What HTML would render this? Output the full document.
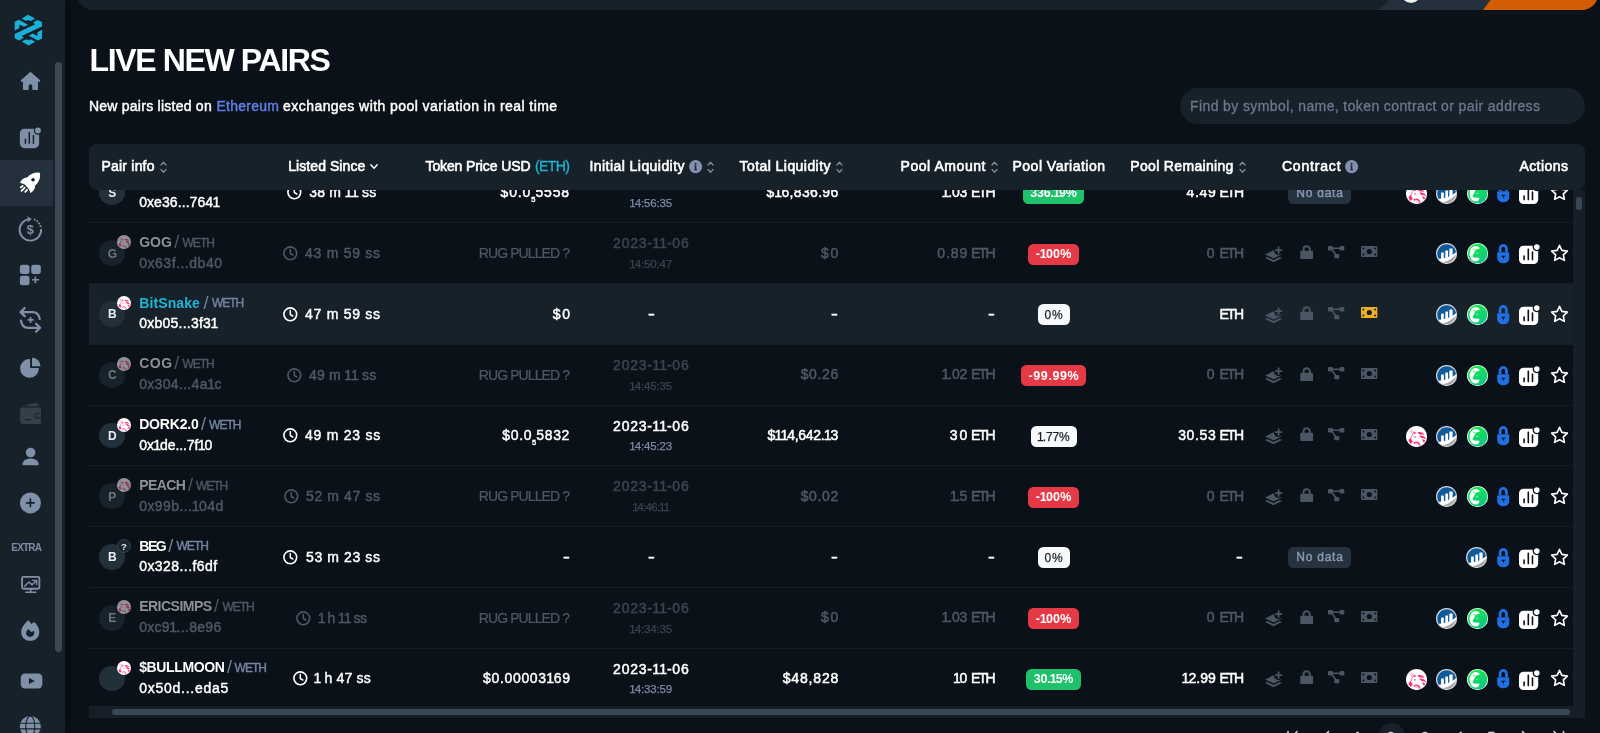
<!DOCTYPE html>
<html lang="en"><head><meta charset="utf-8"><title>Live New Pairs</title>
<style>
html,body{margin:0;padding:0;}
body{width:1600px;height:733px;overflow:hidden;background:#0b1118;font-family:"Liberation Sans", sans-serif;position:relative;}
.t{position:absolute;white-space:pre;display:block;}
.a{position:absolute;}
svg{position:absolute;overflow:visible;}
.row{position:absolute;left:89px;width:1484px;height:61px;border-top:1px solid #141c24;box-sizing:border-box;}
.av{position:absolute;width:25.8px;height:25.8px;border-radius:50%;background:#22303b;}
.bdg{position:absolute;height:21px;border-radius:5.5px;}
</style></head><body><div id="root" style="position:absolute;left:0;top:0;width:1600px;height:733px;overflow:hidden;will-change:transform;">
<svg width="0" height="0" style="position:absolute"><defs>
<linearGradient id="gg" gradientUnits="userSpaceOnUse" x1="6" y1="2" x2="14" y2="19"><stop offset="0" stop-color="#12e84e"/><stop offset="1" stop-color="#10c684"/></linearGradient>
<symbol id="uni" viewBox="0 0 20 20"><circle cx="10" cy="10" r="10" fill="#fff"/>
<path d="M3.300 3.800L6.300 7.500M4.500 3.400L7.300 6.600" stroke="#ff7dab" stroke-width=".7" fill="none"/>
<path d="M7.700 5.600C6.300 7.500 5.100 9.800 4.400 12" stroke="#ff6b9f" stroke-width=".9" fill="none"/>
<path fill="#ff2d78" d="M8.200 4.900L7.100 7.500L9.600 7z"/>
<ellipse cx="8.500" cy="10.200" rx=".95" ry=".6" fill="#ff2d78"/>
<path fill="#ff2d78" d="M2.500 13L4.700 11.200C4.900 12.800 5.600 13.900 6.500 14.600L4.400 16.900C3.300 16 2.600 14.700 2.500 13z"/>
<path fill="#ff2d78" d="M10.900 5.900C12.700 5.500 14.600 5.800 16 6.500L17.500 8.300C15.800 7.900 14.200 7.900 12.600 8z"/>
<path fill="#ff2d78" d="M12.400 8.700C14.400 8.800 16.300 9.500 17.800 10.300L19 12.400C17.400 11.500 15.700 11.100 14.100 11z"/>
<path fill="#ff2d78" d="M14.800 12.300C16.100 12.600 17.300 13.100 18.400 13.900L16.900 15.900z"/>
<path d="M7.300 16.400C8.200 15.500 9.300 15.100 10.300 15.300C11.800 15.600 12.800 17 13 18.600" stroke="#ff3d82" stroke-width="1.400" fill="none"/>
<path d="M9 17.400C9.600 17 10.400 17.100 10.900 17.700" stroke="#ff7dab" stroke-width=".7" fill="none"/>
</symbol>
<symbol id="cmc" viewBox="0 0 20 20"><circle cx="10" cy="10" r="10" fill="#d3d7db"/><circle cx="10" cy="10" r="8.900" fill="#fff"/>
<path fill="#105a99" d="M2.600 14.900A8.900 8.900 0 1 1 18.850 8.700C16.300 11 12.500 13.300 8 14.200C6 14.600 4 14.900 2.600 14.900z"/>
<path fill="#a6a6a6" d="M6.300 18.100C11 17.300 16 14.500 18.800 10.600A8.900 8.900 0 0 1 6.300 18.100z"/>
<path fill="#fff" d="M4.800 9.300q0-.4.400-.4h1.800q.4 0 .4.400V15H4.800zM8.800 7.500q0-.4.400-.4h1.800q.4 0 .4.400V14.500H8.800zM12.600 5.500q0-.4.400-.4h2.300q.4 0 .4.400V12L12.600 13.500z"/></symbol>
<symbol id="gecko" viewBox="0 0 20 20"><circle cx="10" cy="10" r="10" fill="#e4fff0"/><circle cx="10" cy="10" r="9.200" fill="url(#gg)"/>
<ellipse cx="8.200" cy="10.100" rx="5.800" ry="7.300" fill="#fff"/>
<path fill="url(#gg)" d="M14.200 3.600L11 5.600L8.600 6.200L7.900 7.300L5.100 12.600L6.600 13.700L11.700 13.900C11.700 15.300 11.200 16.600 10.200 17.700L16 17.500L19 10L17 4z"/>
<path d="M5.600 5.400L8.300 7" stroke="#12e050" stroke-width=".7" fill="none"/>
<ellipse cx="9.700" cy="9.800" rx="1" ry=".5" transform="rotate(-30 9.700 9.800)" fill="#b6f7cc"/></symbol>
<symbol id="block" viewBox="0 0 12.4 19.6"><path fill="none" stroke="#2070e2" stroke-width="2.800" d="M3 8V4.650a3.200 3.200 0 0 1 6.400 0V8"/>
<path fill="#2070e2" d="M0 9.350q0-1 1-1h10.400q1 0 1 1V13.450a6.200 6.100 0 0 1-12.400 0z"/>
<path fill="#0b1118" d="M4.300 11.850h3.900v.85H7L6.250 15.500L5.500 12.700H4.300z"/></symbol>
<symbol id="sq" viewBox="0 0 21 20"><rect x="0" y="1.700" width="19.200" height="18.300" rx="4.600" fill="#fff"/>
<circle cx="17.800" cy="3.100" r="4.100" fill="#0b1118"/><circle cx="17.800" cy="3.100" r="2.800" fill="#fff"/>
<path d="M5.100 12V15.600M9.300 5.200V15.600M13.500 8V15.600" stroke="#0b1118" stroke-width="1.600" stroke-linecap="round"/></symbol>
<symbol id="star" viewBox="0 0 18.400 17.600"><path fill="none" stroke="#fff" stroke-width="1.600" stroke-linejoin="round" d="M9.200 1.300l2.350 5 5.450.7-4 3.800 1 5.400-4.800-2.650-4.800 2.650 1-5.400-4-3.800 5.450-.7z"/></symbol>
<symbol id="layer" viewBox="0 0 18 17"><path d="M0 8.400 L8.500 4.200 L12 6 L17 8.400 L8.500 12.400 Z"/><path d="M0 12 L2.200 11 L8.500 14 L14.800 11 L17 12 L8.500 16.200 Z"/>
<circle cx="13.600" cy="4.400" r="4.600" fill="var(--bg,#0b1118)"/><path d="M13.600 .400V7.800M10 4.200H17.200" stroke-width="1.800" fill="none" stroke="currentColor"/></symbol>
<symbol id="lock" viewBox="0 0 13.400 14.400"><path fill="none" stroke-width="2" stroke="currentColor" d="M3.500 7V4.400a3.200 3.200 0 0 1 6.400 0V7"/><rect x="0" y="6" width="13.400" height="8.400" rx="1.500"/></symbol>
<symbol id="diag" viewBox="0 0 16.600 12.600"><rect x="0" y="0" width="5" height="4.600" rx="1"/><rect x="11.600" y="0" width="5" height="4.600" rx="1"/><rect x="6.300" y="8" width="5" height="4.600" rx="1"/>
<path d="M4 2.300H12.500M3.600 2.800L8.600 10" stroke-width="1.500" fill="none" stroke="currentColor"/></symbol>
<symbol id="money" viewBox="0 0 16.600 11"><rect width="16.600" height="11" rx="1.200"/><circle cx="8.300" cy="5.500" r="2.600" fill="var(--bg,#0b1118)"/>
<circle cx="2.400" cy="2.400" r="1" fill="var(--bg,#0b1118)"/><circle cx="14.200" cy="2.400" r="1" fill="var(--bg,#0b1118)"/><circle cx="2.400" cy="8.600" r="1" fill="var(--bg,#0b1118)"/><circle cx="14.200" cy="8.600" r="1" fill="var(--bg,#0b1118)"/></symbol>
</defs></svg>
<header id="topbar">
<div class="a" style="left:1360px;top:-20px;width:160px;height:30px;background:#24303b;"></div>
<div class="a" style="left:77px;top:-20px;width:1312px;height:30px;background:#17212a;border-radius:0 0 16px 16px;"></div>
<div class="a" style="left:1483px;top:-20px;width:115px;height:30px;overflow:hidden;border-radius:0 0 16px 0;"><div class="a" style="left:0;top:0;width:140px;height:30px;background:#d25d05;transform:skewX(-37deg);transform-origin:bottom left;"></div></div>
<div class="a" style="left:1400.5px;top:-17px;width:20px;height:20px;background:#f1f1f1;border-radius:50%;"></div>
</header>
<nav id="sidebar">
<div class="a" style="left:0px;top:0px;width:65px;height:733px;background:#17212a;box-shadow:3px 0 8px rgba(0,0,0,.35);"></div>
<div class="a" style="left:0px;top:160px;width:53px;height:45.5px;background:#24313d;"></div>
<div class="a" style="left:55.3px;top:62px;width:6.8px;height:590px;background:#3a4856;border-radius:4px;"></div>
<svg style="left:8px;top:8px;" width="44" height="44" viewBox="0 0 733 733"><g fill="#1cb0d8">
<polygon points="336,112 453,178 376,217 336,200 303,217 228,175"/>
<polygon points="112,230 180,197 335,277 267,312 190,273 190,335 112,377"/>
<polygon points="112,432 453,272 416,242 496,198 566,233 566,310 227,466 264,496 184,540 112,505"/>
<polygon points="568,508 500,541 345,461 413,426 490,465 490,403 568,361"/>
<polygon points="344,626 227,560 304,521 344,538 377,521 452,563"/>
</g></svg>
<svg style="left:14px;top:64px;" width="32" height="32" viewBox="0 0 733 733"><path fill="#8090a8" d="M377 180 L598 375 Q606 395 590 408 L550 408 L550 575 Q550 597 528 597 L440 597 Q418 597 418 575 L418 495 Q418 470 395 470 L360 470 Q337 470 337 495 L337 575 Q337 597 315 597 L227 597 Q205 597 205 575 L205 408 L165 408 Q150 395 157 375 Z"/></svg>
<svg style="left:14px;top:122px;" width="32" height="32" viewBox="0 0 733 733"><rect x="135" y="155" width="440" height="445" rx="105" fill="#8090a8"/>
<circle cx="548" cy="195" r="95" fill="#17212a"/><circle cx="548" cy="195" r="68" fill="#8090a8"/>
<path d="M262 395V488M350 240V488M445 310V488" stroke="#17212a" stroke-width="34" stroke-linecap="round" fill="none"/></svg>
<svg style="left:14px;top:167px;" width="32" height="32" viewBox="0 0 733 733"><path fill="#fff" d="M590 130 C500 110 380 150 300 240 C230 235 170 290 135 365 C180 360 225 385 255 415 L330 490 C350 520 375 560 365 595 C440 570 490 500 480 430 C570 350 620 230 590 130 Z"/>
<circle cx="435" cy="290" r="40" fill="#10181f"/>
<path d="M158 466 L200 434 M172 545 L245 472 M257 568 L300 525" stroke="#fff" stroke-width="42" stroke-linecap="round"/></svg>
<svg style="left:14px;top:213px;" width="32" height="32" viewBox="0 0 733 733"><path d="M622 385 A247 247 0 1 1 352 140" fill="none" stroke="#8090a8" stroke-width="44" stroke-linecap="round"/>
<path d="M285 70 L410 135 L300 215 L330 140 Z" fill="#8090a8"/>
<path d="M455 148 A247 247 0 0 1 615 325" fill="none" stroke="#8090a8" stroke-width="44" stroke-dasharray="38 30"/>
<text x="375" y="480" text-anchor="middle" font-family="Liberation Sans, sans-serif" font-weight="700" font-size="290" fill="#8090a8">$</text></svg>
<svg style="left:14px;top:258px;" width="32" height="32" viewBox="0 0 733 733"><g fill="#8090a8"><rect x="135" y="155" width="220" height="210" rx="58"/><rect x="395" y="155" width="220" height="210" rx="58"/><rect x="135" y="405" width="220" height="220" rx="58"/></g>
<path d="M412 500H575M490 425V580" stroke="#8090a8" stroke-width="36" fill="none"/></svg>
<svg style="left:14px;top:304px;" width="32" height="32" viewBox="0 0 733 733"><g fill="none" stroke="#8090a8" stroke-width="52" stroke-linecap="round" stroke-linejoin="round">
<path d="M590 340 C570 240 520 185 430 185 L160 185 M245 92 L152 185 L245 278"/>
<path d="M160 380 C175 480 230 545 320 545 L595 545 M505 452 L598 545 L505 635"/></g>
<path d="M312 365H450M380 297V435" stroke="#8090a8" stroke-width="38" fill="none"/></svg>
<svg style="left:14px;top:351px;" width="32" height="32" viewBox="0 0 733 733"><path fill="#8090a8" d="M368 185 A215 215 0 1 0 570 392 L368 392 Z"/>
<path fill="#8090a8" d="M412 152 A195 195 0 0 1 607 347 L412 347 Z"/></svg>
<svg style="left:14px;top:398px;" width="32" height="32" viewBox="0 0 733 733"><path fill="#343f4b" d="M165 235 C250 170 400 120 480 113 C540 110 570 150 577 190 L200 190 Z"/>
<path fill="#343f4b" d="M210 215 H620 V595 H210 Q140 595 140 525 V285 Q140 215 210 215 Z"/>
<rect x="462" y="348" width="200" height="125" rx="62" fill="#17212a"/>
<rect x="482" y="368" width="160" height="85" rx="42" fill="#343f4b"/>
<rect x="620" y="340" width="60" height="140" fill="#17212a"/>
<circle cx="540" cy="410" r="17" fill="#17212a"/>
<path d="M262 495H380" stroke="#17212a" stroke-width="30" stroke-linecap="round"/></svg>
<svg style="left:14px;top:441px;" width="32" height="32" viewBox="0 0 733 733"><circle cx="380" cy="265" r="110" fill="#8090a8"/>
<path fill="#8090a8" d="M195 540 C195 450 270 400 380 400 C490 400 565 450 565 540 Q565 558 545 558 L215 558 Q195 558 195 540 Z"/></svg>
<svg style="left:14px;top:487px;" width="32" height="32" viewBox="0 0 733 733"><circle cx="377" cy="365" r="240" fill="#8090a8"/>
<path d="M290 365H462M376 278V450" stroke="#17212a" stroke-width="38" stroke-linecap="round"/></svg>
<svg style="left:4px;top:530px;" width="52" height="70" viewBox="0 0 545 733.6"><rect x="189" y="491" width="182" height="125" rx="16" fill="none" stroke="#8090a8" stroke-width="19"/>
<path d="M280 625V650M228 652H333" stroke="#8090a8" stroke-width="17" stroke-linecap="round"/>
<path d="M216 590 L262 545 L295 575 L338 532 M300 528 H342 V568" fill="none" stroke="#8090a8" stroke-width="15" stroke-linejoin="round" stroke-linecap="round"/></svg>
<svg style="left:14px;top:615px;" width="32" height="32" viewBox="0 0 733 733"><path fill="#8090a8" d="M330 120 C230 200 165 300 165 395 C165 510 255 592 372 592 C490 592 580 510 580 395 C580 300 530 220 460 160 L400 205 Z"/>
<path fill="#17212a" d="M330 320 C295 350 278 385 278 410 C278 465 320 500 372 500 C425 500 465 460 465 410 C465 395 462 380 455 368 L392 392 Z"/></svg>
<svg style="left:10px;top:660px;" width="44" height="73" viewBox="0 0 442 733"><rect x="108" y="135" width="217" height="150" rx="42" fill="#8090a8"/>
<path d="M190 180 L190 240 L250 210 Z" fill="#17212a"/>
<circle cx="204" cy="668" r="106" fill="#8090a8"/>
<path d="M98 635H310M98 692H310" stroke="#17212a" stroke-width="11"/>
<ellipse cx="204" cy="668" rx="45" ry="106" fill="none" stroke="#17212a" stroke-width="11"/></svg>
<span class="t" style="left:11.30px;top:543.13px;font-size:10px;line-height:10px;color:#7d8ba5;font-weight:700;letter-spacing:-0.827px;">EXTRA</span>
</nav>
<div id="table-body" role="presentation">
<div class="a" style="left:89px;top:283.15px;width:1484px;height:60.9px;background:#17212a;"></div>
<div class="row" style="top:161.65px"></div>
<div class="row" style="top:222.4px"></div>
<div class="row" style="top:283.15px"></div>
<div class="row" style="top:343.9px"></div>
<div class="row" style="top:404.65px"></div>
<div class="row" style="top:465.4px"></div>
<div class="row" style="top:526.15px"></div>
<div class="row" style="top:586.9px"></div>
<div class="row" style="top:647.65px"></div>
</div>
<div id="scrollbars">
<div class="a" style="left:1573px;top:190px;width:12px;height:528px;background:#161f28;"></div>
<div class="a" style="left:1576px;top:197px;width:6px;height:12.5px;background:#3a4856;border-radius:3px;"></div>
<div class="a" style="left:89px;top:706px;width:1484px;height:12px;background:#161f28;"></div>
<div class="a" style="left:112px;top:708.5px;width:1458px;height:6.5px;background:#3a4856;border-radius:4px;"></div>
</div>
<div id="pagination">
<div class="a" style="left:1377.5px;top:723.4px;width:27px;height:27px;background:#17212a;border-radius:50%;"></div>
<svg style="left:1280px;top:725px" width="300" height="20" viewBox="1280 724 300 20"><g fill="none" stroke="#d4d8dd" stroke-width="1.6" stroke-linecap="round" stroke-linejoin="round"><path d="M1288 730.5V742M1297 730.5L1291.5 736.5L1297 742"/><path d="M1328.5 730.5L1323 736.5L1328.5 742"/><path d="M1522.5 730.5L1528 736.5L1522.5 742"/><path d="M1554 730.5L1559.5 736.5L1554 742M1563.5 730.5V742"/></g></svg>
<span class="t" style="left:1354.34px;top:729.95px;font-size:14px;line-height:14px;color:#d4d8dd;-webkit-text-stroke:0.45px #d4d8dd;"><span style="margin:0 -0.90px 0 -0.60px">1</span></span>
<span class="t" style="left:1387.10px;top:729.95px;font-size:14px;line-height:14px;color:#d4d8dd;-webkit-text-stroke:0.45px #d4d8dd;">2</span>
<span class="t" style="left:1421.10px;top:729.95px;font-size:14px;line-height:14px;color:#d4d8dd;-webkit-text-stroke:0.45px #d4d8dd;">3</span>
<span class="t" style="left:1455.60px;top:729.95px;font-size:14px;line-height:14px;color:#d4d8dd;-webkit-text-stroke:0.45px #d4d8dd;">4</span>
<span class="t" style="left:1487.60px;top:729.95px;font-size:14px;line-height:14px;color:#d4d8dd;-webkit-text-stroke:0.45px #d4d8dd;">5</span>
</div>
<div id="search">
<div class="a" style="left:1180px;top:88px;width:405px;height:36px;background:#17212a;border-radius:18px;"></div>
<span class="t" style="left:1190.00px;top:98.65px;font-size:14px;line-height:14px;color:#6b798e;letter-spacing:0.393px;-webkit-text-stroke:0.3px #6b798e;">Find by symbol, name, token contract or pair address</span>
</div>
<section id="heading">
<span class="t" style="left:89.60px;top:43.91px;font-size:32px;line-height:32px;color:#ffffff;font-weight:700;letter-spacing:-1.368px;">LIVE NEW PAIRS</span>
<span class="t" style="left:88.90px;top:98.75px;font-size:14px;line-height:14px;color:#ffffff;letter-spacing:0.251px;-webkit-text-stroke:0.45px #ffffff;">New pairs listed on</span>
<span class="t" style="left:216.50px;top:98.75px;font-size:14px;line-height:14px;color:#5f7fe8;letter-spacing:0.242px;-webkit-text-stroke:0.45px #5f7fe8;">Ethereum</span>
<span class="t" style="left:283.10px;top:98.75px;font-size:14px;line-height:14px;color:#ffffff;letter-spacing:0.438px;-webkit-text-stroke:0.45px #ffffff;">exchanges with pool variation in real time</span>
</section>
<div id="table-head" role="row">
<div class="a" style="left:89px;top:144px;width:1496px;height:46px;background:#17212a;border-radius:8px;z-index:5;"></div>
<svg style="left:159.5px;top:160.5px;z-index:6" width="7" height="12.5" viewBox="0 0 7 12.5"><path d="M1 4 L3.5 1.3 L6 4 M1 8.5 L3.5 11.2 L6 8.5" fill="none" stroke="#7d8ba5" stroke-width="1.3" stroke-linecap="round" stroke-linejoin="round"/></svg>
<svg style="left:707px;top:160.5px;z-index:6" width="7" height="12.5" viewBox="0 0 7 12.5"><path d="M1 4 L3.5 1.3 L6 4 M1 8.5 L3.5 11.2 L6 8.5" fill="none" stroke="#7d8ba5" stroke-width="1.3" stroke-linecap="round" stroke-linejoin="round"/></svg>
<svg style="left:835.7px;top:160.5px;z-index:6" width="7" height="12.5" viewBox="0 0 7 12.5"><path d="M1 4 L3.5 1.3 L6 4 M1 8.5 L3.5 11.2 L6 8.5" fill="none" stroke="#7d8ba5" stroke-width="1.3" stroke-linecap="round" stroke-linejoin="round"/></svg>
<svg style="left:990.7px;top:160.5px;z-index:6" width="7" height="12.5" viewBox="0 0 7 12.5"><path d="M1 4 L3.5 1.3 L6 4 M1 8.5 L3.5 11.2 L6 8.5" fill="none" stroke="#7d8ba5" stroke-width="1.3" stroke-linecap="round" stroke-linejoin="round"/></svg>
<svg style="left:1238.7px;top:160.5px;z-index:6" width="7" height="12.5" viewBox="0 0 7 12.5"><path d="M1 4 L3.5 1.3 L6 4 M1 8.5 L3.5 11.2 L6 8.5" fill="none" stroke="#7d8ba5" stroke-width="1.3" stroke-linecap="round" stroke-linejoin="round"/></svg>
<svg style="left:370px;top:164.3px;z-index:6" width="8" height="5.5" viewBox="0 0 8 5.5"><path d="M0.8 0.8 L4 4.3 L7.2 0.8" fill="none" stroke="#fff" stroke-width="1.4" stroke-linecap="round" stroke-linejoin="round"/></svg>
<svg style="left:689.3px;top:160.3px;z-index:6" width="13.2" height="13.2" viewBox="0 0 13.2 13.2"><circle cx="6.6" cy="6.6" r="6.6" fill="#8291ad"/><circle cx="6.6" cy="3.7" r="1" fill="#17212a"/><path d="M5.3 5.6h2v3.6h.8v1.1H5.1V9.2h.9V6.7h-.7z" fill="#17212a"/></svg>
<svg style="left:1345.3px;top:160.3px;z-index:6" width="13.2" height="13.2" viewBox="0 0 13.2 13.2"><circle cx="6.6" cy="6.6" r="6.6" fill="#8291ad"/><circle cx="6.6" cy="3.7" r="1" fill="#17212a"/><path d="M5.3 5.6h2v3.6h.8v1.1H5.1V9.2h.9V6.7h-.7z" fill="#17212a"/></svg>
<span class="t" style="left:101.50px;top:159.35px;font-size:14px;line-height:14px;color:#ffffff;letter-spacing:0.205px;-webkit-text-stroke:0.6px #ffffff;z-index:6;">Pair info</span>
<span class="t" style="left:288.25px;top:159.35px;font-size:14px;line-height:14px;color:#ffffff;letter-spacing:0.065px;-webkit-text-stroke:0.6px #ffffff;z-index:6;">Listed Since</span>
<span class="t" style="left:425.50px;top:159.35px;font-size:14px;line-height:14px;color:#ffffff;letter-spacing:-0.114px;-webkit-text-stroke:0.6px #ffffff;z-index:6;">Token Price USD</span>
<span class="t" style="left:535.00px;top:159.35px;font-size:14px;line-height:14px;color:#1fb6d5;letter-spacing:-0.582px;-webkit-text-stroke:0.3px #1fb6d5;z-index:6;">(ETH)</span>
<span class="t" style="left:589.50px;top:159.35px;font-size:14px;line-height:14px;color:#ffffff;letter-spacing:0.441px;-webkit-text-stroke:0.6px #ffffff;z-index:6;">Initial Liquidity</span>
<span class="t" style="left:739.50px;top:159.35px;font-size:14px;line-height:14px;color:#ffffff;letter-spacing:0.441px;-webkit-text-stroke:0.6px #ffffff;z-index:6;">Total Liquidity</span>
<span class="t" style="left:900.50px;top:159.35px;font-size:14px;line-height:14px;color:#ffffff;letter-spacing:0.561px;-webkit-text-stroke:0.6px #ffffff;z-index:6;">Pool Amount</span>
<span class="t" style="left:1012.50px;top:159.35px;font-size:14px;line-height:14px;color:#ffffff;letter-spacing:0.489px;-webkit-text-stroke:0.6px #ffffff;z-index:6;">Pool Variation</span>
<span class="t" style="left:1130.30px;top:159.35px;font-size:14px;line-height:14px;color:#ffffff;letter-spacing:0.327px;-webkit-text-stroke:0.6px #ffffff;z-index:6;">Pool Remaining</span>
<span class="t" style="left:1281.90px;top:159.35px;font-size:14px;line-height:14px;color:#ffffff;letter-spacing:0.825px;-webkit-text-stroke:0.6px #ffffff;z-index:6;">Contract</span>
<span class="t" style="left:1519.40px;top:159.35px;font-size:14px;line-height:14px;color:#ffffff;letter-spacing:0.446px;-webkit-text-stroke:0.6px #ffffff;z-index:6;">Actions</span>
</div>
<div id="row-1" role="row">
<div class="av" style="left:99.4px;top:179.70px"></div>
<svg style="left:117px;top:174.65px;opacity:1" width="14" height="14" viewBox="0 0 20 20"><use href="#uni"/></svg>
<svg style="left:286.5px;top:185.25px" width="14.6" height="14.6" viewBox="0 0 14.6 14.6"><circle cx="7.3" cy="7.3" r="6.4" fill="none" stroke="#ffffff" stroke-width="1.6"/><path d="M7.3 3.6V7.5L9.8 9" fill="none" stroke="#ffffff" stroke-width="1.5" stroke-linecap="round" stroke-linejoin="round"/></svg>
<div class="bdg" style="left:1022.85px;top:182.75px;width:61.5px;background:#1fc16b"></div>
<div class="bdg" style="left:1288px;top:182.50px;width:63px;height:21px;background:#26333f"></div>
<svg style="left:1405.800px;top:182.65px" width="21.2" height="21.2" viewBox="0 0 20 20"><use href="#uni"/></svg>
<svg style="left:1436.2px;top:182.65px" width="21.2" height="21.2" viewBox="0 0 20 20"><use href="#cmc"/></svg>
<svg style="left:1466.7px;top:182.65px" width="21.2" height="21.2" viewBox="0 0 20 20"><use href="#gecko"/></svg>
<svg style="left:1497.100px;top:183.25px" width="12.6" height="19.6" viewBox="0 0 12.4 19.6"><use href="#block"/></svg>
<svg style="left:1519.2px;top:183.55px" width="21" height="20" viewBox="0 0 21 20"><use href="#sq"/></svg>
<svg style="left:1549.600px;top:183.25px" width="19" height="17.8" viewBox="0 0 18.4 17.6"><use href="#star"/></svg>
<span class="t" style="left:108.29px;top:186.89px;font-size:12px;line-height:12px;color:#eceff2;font-weight:700;">S</span>
<span class="t" style="left:139.20px;top:194.75px;font-size:14px;line-height:14px;color:#ffffff;letter-spacing:0.074px;-webkit-text-stroke:0.45px #ffffff;">0xe36...764<span style="margin:0 -0.90px 0 -0.60px">1</span></span>
<span class="t" style="left:309.25px;top:185.40px;font-size:14px;line-height:14px;color:#ffffff;letter-spacing:0.163px;-webkit-text-stroke:0.45px #ffffff;">38 m <span style="margin:0 -0.90px 0 -0.60px">1</span><span style="margin:0 -0.90px 0 -0.60px">1</span> ss</span>
<span class="t" style="left:500.60px;top:185.20px;font-size:14px;line-height:14px;color:#ffffff;letter-spacing:0.853px;-webkit-text-stroke:0.45px #ffffff;">$0.0<span style="font-size:7.5px;position:relative;top:4.5px;letter-spacing:0">5</span>5558</span>
<span class="t" style="left:613.10px;top:175.65px;font-size:14px;line-height:14px;color:#ffffff;letter-spacing:0.770px;-webkit-text-stroke:0.5px #ffffff;">2023-<span style="margin:0 -0.90px 0 -0.60px">1</span><span style="margin:0 -0.90px 0 -0.60px">1</span>-06</span>
<span class="t" style="left:629.80px;top:198.42px;font-size:11.5px;line-height:11.5px;color:#7c8aa6;letter-spacing:-0.166px;-webkit-text-stroke:0.25px #7c8aa6;"><span style="margin:0 -0.74px 0 -0.49px">1</span>4:56:35</span>
<span class="t" style="left:766.60px;top:185.20px;font-size:14px;line-height:14px;color:#ffffff;letter-spacing:0.343px;-webkit-text-stroke:0.5px #ffffff;">$<span style="margin:0 -0.90px 0 -0.60px">1</span>6,836.96</span>
<span class="t" style="left:942.20px;top:185.20px;font-size:14px;line-height:14px;color:#ffffff;letter-spacing:-0.227px;-webkit-text-stroke:0.5px #ffffff;"><span style="margin:0 -0.90px 0 -0.60px">1</span>.03</span>
<span class="t" style="left:971.00px;top:185.20px;font-size:14px;line-height:14px;color:#ffffff;letter-spacing:-1.750px;-webkit-text-stroke:0.5px #ffffff;">ETH</span>
<span class="t" style="left:1186.50px;top:185.20px;font-size:14px;line-height:14px;color:#ffffff;letter-spacing:0.683px;-webkit-text-stroke:0.5px #ffffff;">4.49</span>
<span class="t" style="left:1219.50px;top:185.20px;font-size:14px;line-height:14px;color:#ffffff;letter-spacing:-1.750px;-webkit-text-stroke:0.5px #ffffff;">ETH</span>
<span class="t" style="left:1030.35px;top:187.37px;font-size:12.5px;line-height:12.5px;color:#fff;font-weight:700;letter-spacing:-0.258px;">336.<span style="margin:0 -0.80px 0 -0.54px">1</span>9%</span>
<span class="t" style="left:1296.35px;top:186.99px;font-size:12px;line-height:12px;color:#8b9bb4;letter-spacing:0.745px;-webkit-text-stroke:0.4px #8b9bb4;">No data</span>
</div>
<div id="row-2" role="row">
<div class="av" style="left:99.4px;top:240.45px;background:#18222b"></div>
<svg style="left:117px;top:235.40px;opacity:0.55" width="14" height="14" viewBox="0 0 20 20"><use href="#uni"/></svg>
<svg style="left:282.5px;top:246.0px" width="14.6" height="14.6" viewBox="0 0 14.6 14.6"><circle cx="7.3" cy="7.3" r="6.4" fill="none" stroke="#4d5865" stroke-width="1.6"/><path d="M7.3 3.6V7.5L9.8 9" fill="none" stroke="#4d5865" stroke-width="1.5" stroke-linecap="round" stroke-linejoin="round"/></svg>
<div class="bdg" style="left:1028.35px;top:243.50px;width:50.5px;background:#e63946"></div>
<svg style="left:1264.5px;top:245.95px" width="18" height="17" viewBox="0 0 18 17" fill="currentColor" color="#4a5664"><use href="#layer"/></svg>
<svg style="left:1299.5px;top:245.05px" width="13.4" height="14.1" viewBox="0 0 13.4 14.4" fill="currentColor" color="#4a5664"><use href="#lock"/></svg>
<svg style="left:1327.5px;top:245.95px" width="16.6" height="12.6" viewBox="0 0 16.6 12.6" fill="currentColor" color="#4a5664"><use href="#diag"/></svg>
<svg style="left:1360.6px;top:246.25px" width="16.6" height="11" viewBox="0 0 16.6 11" fill="currentColor" color="#4a5664"><use href="#money"/></svg>
<svg style="left:1436.2px;top:243.4px" width="21.2" height="21.2" viewBox="0 0 20 20"><use href="#cmc"/></svg>
<svg style="left:1466.7px;top:243.4px" width="21.2" height="21.2" viewBox="0 0 20 20"><use href="#gecko"/></svg>
<svg style="left:1497.100px;top:244.0px" width="12.6" height="19.6" viewBox="0 0 12.4 19.6"><use href="#block"/></svg>
<svg style="left:1519.2px;top:244.3px" width="21" height="20" viewBox="0 0 21 20"><use href="#sq"/></svg>
<svg style="left:1549.600px;top:244.0px" width="19" height="17.8" viewBox="0 0 18.4 17.6"><use href="#star"/></svg>
<span class="t" style="left:107.63px;top:247.64px;font-size:12px;line-height:12px;color:#6f7780;font-weight:700;">G</span>
<span class="t" style="left:139.20px;top:234.85px;font-size:14px;line-height:14px;color:#8d9196;font-weight:700;letter-spacing:-0.036px;">GOG</span>
<span class="t" style="left:174.30px;top:232.86px;font-size:18px;line-height:18px;color:#4d5865;">/</span>
<span class="t" style="left:182.50px;top:236.54px;font-size:12px;line-height:12px;color:#4d5865;letter-spacing:-0.976px;-webkit-text-stroke:0.4px #4d5865;">WETH</span>
<span class="t" style="left:139.20px;top:255.50px;font-size:14px;line-height:14px;color:#4d5865;letter-spacing:0.522px;-webkit-text-stroke:0.45px #4d5865;">0x63f...db40</span>
<span class="t" style="left:305.00px;top:246.15px;font-size:14px;line-height:14px;color:#4d5865;letter-spacing:0.724px;-webkit-text-stroke:0.45px #4d5865;">43 m 59 ss</span>
<span class="t" style="left:478.80px;top:246.00px;font-size:14px;line-height:14px;color:#4d5865;letter-spacing:-0.905px;-webkit-text-stroke:0.2px #4d5865;">RUG PULLED ?</span>
<span class="t" style="left:613.10px;top:236.40px;font-size:14px;line-height:14px;color:#3a444f;letter-spacing:0.770px;-webkit-text-stroke:0.5px #3a444f;">2023-<span style="margin:0 -0.90px 0 -0.60px">1</span><span style="margin:0 -0.90px 0 -0.60px">1</span>-06</span>
<span class="t" style="left:629.80px;top:259.17px;font-size:11.5px;line-height:11.5px;color:#3a444f;letter-spacing:-0.166px;-webkit-text-stroke:0.25px #3a444f;"><span style="margin:0 -0.74px 0 -0.49px">1</span>4:50:47</span>
<span class="t" style="left:821.00px;top:245.95px;font-size:14px;line-height:14px;color:#4d5865;letter-spacing:1.722px;-webkit-text-stroke:0.5px #4d5865;">$0</span>
<span class="t" style="left:937.30px;top:245.95px;font-size:14px;line-height:14px;color:#4d5865;letter-spacing:0.917px;-webkit-text-stroke:0.5px #4d5865;">0.89</span>
<span class="t" style="left:971.00px;top:245.95px;font-size:14px;line-height:14px;color:#4d5865;letter-spacing:-1.750px;-webkit-text-stroke:0.5px #4d5865;">ETH</span>
<span class="t" style="left:1206.70px;top:245.95px;font-size:14px;line-height:14px;color:#4d5865;-webkit-text-stroke:0.5px #4d5865;">0</span>
<span class="t" style="left:1219.50px;top:245.95px;font-size:14px;line-height:14px;color:#4d5865;letter-spacing:-1.750px;-webkit-text-stroke:0.5px #4d5865;">ETH</span>
<span class="t" style="left:1035.85px;top:248.12px;font-size:12.5px;line-height:12.5px;color:#fff;font-weight:700;letter-spacing:0.168px;">-<span style="margin:0 -0.80px 0 -0.54px">1</span>00%</span>
</div>
<div id="row-3" role="row">
<div class="av" style="left:99.4px;top:301.20px"></div>
<svg style="left:117px;top:296.15px;opacity:1" width="14" height="14" viewBox="0 0 20 20"><use href="#uni"/></svg>
<svg style="left:283.2px;top:306.75px" width="14.6" height="14.6" viewBox="0 0 14.6 14.6"><circle cx="7.3" cy="7.3" r="6.4" fill="none" stroke="#ffffff" stroke-width="1.6"/><path d="M7.3 3.6V7.5L9.8 9" fill="none" stroke="#ffffff" stroke-width="1.5" stroke-linecap="round" stroke-linejoin="round"/></svg>
<div class="bdg" style="left:1037.60px;top:304.25px;width:32px;background:#f8f9fa"></div>
<svg style="left:1264.5px;top:306.70px;--bg:#17212a" width="18" height="17" viewBox="0 0 18 17" fill="currentColor" color="#4a5664"><use href="#layer"/></svg>
<svg style="left:1299.5px;top:305.80px" width="13.4" height="14.1" viewBox="0 0 13.4 14.4" fill="currentColor" color="#4a5664"><use href="#lock"/></svg>
<svg style="left:1327.5px;top:306.70px" width="16.6" height="12.6" viewBox="0 0 16.6 12.6" fill="currentColor" color="#4a5664"><use href="#diag"/></svg>
<svg style="left:1360.6px;top:307.00px;--bg:#17212a" width="16.6" height="11" viewBox="0 0 16.6 11" fill="currentColor" color="#f2b124"><use href="#money"/></svg>
<svg style="left:1436.2px;top:304.15px" width="21.2" height="21.2" viewBox="0 0 20 20"><use href="#cmc"/></svg>
<svg style="left:1466.7px;top:304.15px" width="21.2" height="21.2" viewBox="0 0 20 20"><use href="#gecko"/></svg>
<svg style="left:1497.100px;top:304.75px" width="12.6" height="19.6" viewBox="0 0 12.4 19.6"><use href="#block"/></svg>
<svg style="left:1519.2px;top:305.049px" width="21" height="20" viewBox="0 0 21 20"><use href="#sq"/></svg>
<svg style="left:1549.600px;top:304.75px" width="19" height="17.8" viewBox="0 0 18.4 17.6"><use href="#star"/></svg>
<span class="t" style="left:107.96px;top:308.39px;font-size:12px;line-height:12px;color:#eceff2;font-weight:700;">B</span>
<span class="t" style="left:139.20px;top:295.60px;font-size:14px;line-height:14px;color:#1fb6d5;font-weight:700;letter-spacing:0.111px;">BitSnake</span>
<span class="t" style="left:203.50px;top:293.61px;font-size:18px;line-height:18px;color:#7484a0;">/</span>
<span class="t" style="left:211.90px;top:297.29px;font-size:12px;line-height:12px;color:#7484a0;letter-spacing:-0.976px;-webkit-text-stroke:0.4px #7484a0;">WETH</span>
<span class="t" style="left:139.20px;top:316.25px;font-size:14px;line-height:14px;color:#ffffff;letter-spacing:0.237px;-webkit-text-stroke:0.45px #ffffff;">0xb05...3f3<span style="margin:0 -0.90px 0 -0.60px">1</span></span>
<span class="t" style="left:305.00px;top:306.90px;font-size:14px;line-height:14px;color:#ffffff;letter-spacing:0.724px;-webkit-text-stroke:0.45px #ffffff;">47 m 59 ss</span>
<span class="t" style="left:552.70px;top:306.70px;font-size:14px;line-height:14px;color:#ffffff;letter-spacing:1.722px;-webkit-text-stroke:0.45px #ffffff;">$0</span>
<span class="t" style="left:647.60px;top:306.70px;font-size:14px;line-height:14px;color:#ffffff;-webkit-text-stroke:0.45px #ffffff;transform:scaleX(1.45);transform-origin:0 0;">-</span>
<span class="t" style="left:830.80px;top:306.70px;font-size:14px;line-height:14px;color:#ffffff;-webkit-text-stroke:0.45px #ffffff;transform:scaleX(1.45);transform-origin:0 0;">-</span>
<span class="t" style="left:988.00px;top:306.70px;font-size:14px;line-height:14px;color:#ffffff;-webkit-text-stroke:0.45px #ffffff;transform:scaleX(1.45);transform-origin:0 0;">-</span>
<span class="t" style="left:1219.50px;top:306.70px;font-size:14px;line-height:14px;color:#ffffff;letter-spacing:-1.750px;-webkit-text-stroke:0.5px #ffffff;">ETH</span>
<span class="t" style="left:1044.60px;top:309.29px;font-size:12px;line-height:12px;color:#1a232c;letter-spacing:0.656px;-webkit-text-stroke:0.25px #1a232c;">0%</span>
</div>
<div id="row-4" role="row">
<div class="av" style="left:99.4px;top:361.95px;background:#18222b"></div>
<svg style="left:117px;top:356.90px;opacity:0.55" width="14" height="14" viewBox="0 0 20 20"><use href="#uni"/></svg>
<svg style="left:286.9px;top:367.5px" width="14.6" height="14.6" viewBox="0 0 14.6 14.6"><circle cx="7.3" cy="7.3" r="6.4" fill="none" stroke="#4d5865" stroke-width="1.6"/><path d="M7.3 3.6V7.5L9.8 9" fill="none" stroke="#4d5865" stroke-width="1.5" stroke-linecap="round" stroke-linejoin="round"/></svg>
<div class="bdg" style="left:1021.10px;top:365.00px;width:65px;background:#e63946"></div>
<svg style="left:1264.5px;top:367.45px" width="18" height="17" viewBox="0 0 18 17" fill="currentColor" color="#4a5664"><use href="#layer"/></svg>
<svg style="left:1299.5px;top:366.55px" width="13.4" height="14.1" viewBox="0 0 13.4 14.4" fill="currentColor" color="#4a5664"><use href="#lock"/></svg>
<svg style="left:1327.5px;top:367.45px" width="16.6" height="12.6" viewBox="0 0 16.6 12.6" fill="currentColor" color="#4a5664"><use href="#diag"/></svg>
<svg style="left:1360.6px;top:367.75px" width="16.6" height="11" viewBox="0 0 16.6 11" fill="currentColor" color="#4a5664"><use href="#money"/></svg>
<svg style="left:1436.2px;top:364.9px" width="21.2" height="21.2" viewBox="0 0 20 20"><use href="#cmc"/></svg>
<svg style="left:1466.7px;top:364.9px" width="21.2" height="21.2" viewBox="0 0 20 20"><use href="#gecko"/></svg>
<svg style="left:1497.100px;top:365.5px" width="12.6" height="19.6" viewBox="0 0 12.4 19.6"><use href="#block"/></svg>
<svg style="left:1519.2px;top:365.799px" width="21" height="20" viewBox="0 0 21 20"><use href="#sq"/></svg>
<svg style="left:1549.600px;top:365.5px" width="19" height="17.8" viewBox="0 0 18.4 17.6"><use href="#star"/></svg>
<span class="t" style="left:107.96px;top:369.14px;font-size:12px;line-height:12px;color:#6f7780;font-weight:700;">C</span>
<span class="t" style="left:139.20px;top:356.35px;font-size:14px;line-height:14px;color:#8d9196;font-weight:700;letter-spacing:0.505px;">COG</span>
<span class="t" style="left:174.30px;top:354.36px;font-size:18px;line-height:18px;color:#4d5865;">/</span>
<span class="t" style="left:182.40px;top:358.04px;font-size:12px;line-height:12px;color:#4d5865;letter-spacing:-0.976px;-webkit-text-stroke:0.4px #4d5865;">WETH</span>
<span class="t" style="left:139.20px;top:377.00px;font-size:14px;line-height:14px;color:#4d5865;letter-spacing:0.318px;-webkit-text-stroke:0.45px #4d5865;">0x304...4a<span style="margin:0 -0.90px 0 -0.60px">1</span>c</span>
<span class="t" style="left:308.90px;top:367.65px;font-size:14px;line-height:14px;color:#4d5865;letter-spacing:0.208px;-webkit-text-stroke:0.45px #4d5865;">49 m <span style="margin:0 -0.90px 0 -0.60px">1</span><span style="margin:0 -0.90px 0 -0.60px">1</span> ss</span>
<span class="t" style="left:478.80px;top:367.50px;font-size:14px;line-height:14px;color:#4d5865;letter-spacing:-0.905px;-webkit-text-stroke:0.2px #4d5865;">RUG PULLED ?</span>
<span class="t" style="left:613.10px;top:357.90px;font-size:14px;line-height:14px;color:#3a444f;letter-spacing:0.770px;-webkit-text-stroke:0.5px #3a444f;">2023-<span style="margin:0 -0.90px 0 -0.60px">1</span><span style="margin:0 -0.90px 0 -0.60px">1</span>-06</span>
<span class="t" style="left:629.80px;top:380.67px;font-size:11.5px;line-height:11.5px;color:#3a444f;letter-spacing:-0.166px;-webkit-text-stroke:0.25px #3a444f;"><span style="margin:0 -0.74px 0 -0.49px">1</span>4:45:35</span>
<span class="t" style="left:800.70px;top:367.45px;font-size:14px;line-height:14px;color:#4d5865;letter-spacing:0.638px;-webkit-text-stroke:0.5px #4d5865;">$0.26</span>
<span class="t" style="left:942.20px;top:367.45px;font-size:14px;line-height:14px;color:#4d5865;letter-spacing:-0.227px;-webkit-text-stroke:0.5px #4d5865;"><span style="margin:0 -0.90px 0 -0.60px">1</span>.02</span>
<span class="t" style="left:971.00px;top:367.45px;font-size:14px;line-height:14px;color:#4d5865;letter-spacing:-1.750px;-webkit-text-stroke:0.5px #4d5865;">ETH</span>
<span class="t" style="left:1206.70px;top:367.45px;font-size:14px;line-height:14px;color:#4d5865;-webkit-text-stroke:0.5px #4d5865;">0</span>
<span class="t" style="left:1219.50px;top:367.45px;font-size:14px;line-height:14px;color:#4d5865;letter-spacing:-1.750px;-webkit-text-stroke:0.5px #4d5865;">ETH</span>
<span class="t" style="left:1028.60px;top:369.62px;font-size:12.5px;line-height:12.5px;color:#fff;font-weight:700;letter-spacing:0.573px;">-99.99%</span>
</div>
<div id="row-5" role="row">
<div class="av" style="left:99.4px;top:422.70px"></div>
<svg style="left:117px;top:417.65px;opacity:1" width="14" height="14" viewBox="0 0 20 20"><use href="#uni"/></svg>
<svg style="left:282.9px;top:428.25px" width="14.6" height="14.6" viewBox="0 0 14.6 14.6"><circle cx="7.3" cy="7.3" r="6.4" fill="none" stroke="#ffffff" stroke-width="1.6"/><path d="M7.3 3.6V7.5L9.8 9" fill="none" stroke="#ffffff" stroke-width="1.5" stroke-linecap="round" stroke-linejoin="round"/></svg>
<div class="bdg" style="left:1030.60px;top:425.75px;width:46px;background:#f8f9fa"></div>
<svg style="left:1264.5px;top:428.20px" width="18" height="17" viewBox="0 0 18 17" fill="currentColor" color="#4a5664"><use href="#layer"/></svg>
<svg style="left:1299.5px;top:427.30px" width="13.4" height="14.1" viewBox="0 0 13.4 14.4" fill="currentColor" color="#4a5664"><use href="#lock"/></svg>
<svg style="left:1327.5px;top:428.20px" width="16.6" height="12.6" viewBox="0 0 16.6 12.6" fill="currentColor" color="#4a5664"><use href="#diag"/></svg>
<svg style="left:1360.6px;top:428.50px" width="16.6" height="11" viewBox="0 0 16.6 11" fill="currentColor" color="#4a5664"><use href="#money"/></svg>
<svg style="left:1405.800px;top:425.65px" width="21.2" height="21.2" viewBox="0 0 20 20"><use href="#uni"/></svg>
<svg style="left:1436.2px;top:425.65px" width="21.2" height="21.2" viewBox="0 0 20 20"><use href="#cmc"/></svg>
<svg style="left:1466.7px;top:425.65px" width="21.2" height="21.2" viewBox="0 0 20 20"><use href="#gecko"/></svg>
<svg style="left:1497.100px;top:426.25px" width="12.6" height="19.6" viewBox="0 0 12.4 19.6"><use href="#block"/></svg>
<svg style="left:1519.2px;top:426.549px" width="21" height="20" viewBox="0 0 21 20"><use href="#sq"/></svg>
<svg style="left:1549.600px;top:426.25px" width="19" height="17.8" viewBox="0 0 18.4 17.6"><use href="#star"/></svg>
<span class="t" style="left:107.96px;top:429.89px;font-size:12px;line-height:12px;color:#eceff2;font-weight:700;">D</span>
<span class="t" style="left:139.20px;top:417.10px;font-size:14px;line-height:14px;color:#ffffff;font-weight:700;letter-spacing:-0.181px;">DORK2.0</span>
<span class="t" style="left:201.00px;top:415.11px;font-size:18px;line-height:18px;color:#7484a0;">/</span>
<span class="t" style="left:209.10px;top:418.79px;font-size:12px;line-height:12px;color:#7484a0;letter-spacing:-0.976px;-webkit-text-stroke:0.4px #7484a0;">WETH</span>
<span class="t" style="left:139.20px;top:437.75px;font-size:14px;line-height:14px;color:#ffffff;letter-spacing:-0.095px;-webkit-text-stroke:0.45px #ffffff;">0x<span style="margin:0 -0.90px 0 -0.60px">1</span>de...7f<span style="margin:0 -0.90px 0 -0.60px">1</span>0</span>
<span class="t" style="left:305.00px;top:428.40px;font-size:14px;line-height:14px;color:#ffffff;letter-spacing:0.746px;-webkit-text-stroke:0.45px #ffffff;">49 m 23 ss</span>
<span class="t" style="left:502.30px;top:428.20px;font-size:14px;line-height:14px;color:#ffffff;letter-spacing:0.640px;-webkit-text-stroke:0.45px #ffffff;">$0.0<span style="font-size:7.5px;position:relative;top:4.5px;letter-spacing:0">5</span>5832</span>
<span class="t" style="left:613.10px;top:418.65px;font-size:14px;line-height:14px;color:#ffffff;letter-spacing:0.770px;-webkit-text-stroke:0.5px #ffffff;">2023-<span style="margin:0 -0.90px 0 -0.60px">1</span><span style="margin:0 -0.90px 0 -0.60px">1</span>-06</span>
<span class="t" style="left:629.80px;top:441.42px;font-size:11.5px;line-height:11.5px;color:#7c8aa6;letter-spacing:-0.166px;-webkit-text-stroke:0.25px #7c8aa6;"><span style="margin:0 -0.74px 0 -0.49px">1</span>4:45:23</span>
<span class="t" style="left:767.50px;top:428.20px;font-size:14px;line-height:14px;color:#ffffff;letter-spacing:-0.267px;-webkit-text-stroke:0.5px #ffffff;">$<span style="margin:0 -0.90px 0 -0.60px">1</span><span style="margin:0 -0.90px 0 -0.60px">1</span>4,642.<span style="margin:0 -0.90px 0 -0.60px">1</span>3</span>
<span class="t" style="left:949.70px;top:428.20px;font-size:14px;line-height:14px;color:#ffffff;letter-spacing:2.022px;-webkit-text-stroke:0.5px #ffffff;">30</span>
<span class="t" style="left:971.00px;top:428.20px;font-size:14px;line-height:14px;color:#ffffff;letter-spacing:-1.750px;-webkit-text-stroke:0.5px #ffffff;">ETH</span>
<span class="t" style="left:1178.20px;top:428.20px;font-size:14px;line-height:14px;color:#ffffff;letter-spacing:0.638px;-webkit-text-stroke:0.5px #ffffff;">30.53</span>
<span class="t" style="left:1219.50px;top:428.20px;font-size:14px;line-height:14px;color:#ffffff;letter-spacing:-1.750px;-webkit-text-stroke:0.5px #ffffff;">ETH</span>
<span class="t" style="left:1037.60px;top:430.79px;font-size:12px;line-height:12px;color:#1a232c;letter-spacing:-0.195px;-webkit-text-stroke:0.25px #1a232c;"><span style="margin:0 -0.77px 0 -0.51px">1</span>.77%</span>
</div>
<div id="row-6" role="row">
<div class="av" style="left:99.4px;top:483.45px;background:#18222b"></div>
<svg style="left:117px;top:478.40px;opacity:0.55" width="14" height="14" viewBox="0 0 20 20"><use href="#uni"/></svg>
<svg style="left:283.5px;top:489.0px" width="14.6" height="14.6" viewBox="0 0 14.6 14.6"><circle cx="7.3" cy="7.3" r="6.4" fill="none" stroke="#4d5865" stroke-width="1.6"/><path d="M7.3 3.6V7.5L9.8 9" fill="none" stroke="#4d5865" stroke-width="1.5" stroke-linecap="round" stroke-linejoin="round"/></svg>
<div class="bdg" style="left:1028.35px;top:486.50px;width:50.5px;background:#e63946"></div>
<svg style="left:1264.5px;top:488.95px" width="18" height="17" viewBox="0 0 18 17" fill="currentColor" color="#4a5664"><use href="#layer"/></svg>
<svg style="left:1299.5px;top:488.05px" width="13.4" height="14.1" viewBox="0 0 13.4 14.4" fill="currentColor" color="#4a5664"><use href="#lock"/></svg>
<svg style="left:1327.5px;top:488.95px" width="16.6" height="12.6" viewBox="0 0 16.6 12.6" fill="currentColor" color="#4a5664"><use href="#diag"/></svg>
<svg style="left:1360.6px;top:489.25px" width="16.6" height="11" viewBox="0 0 16.6 11" fill="currentColor" color="#4a5664"><use href="#money"/></svg>
<svg style="left:1436.2px;top:486.4px" width="21.2" height="21.2" viewBox="0 0 20 20"><use href="#cmc"/></svg>
<svg style="left:1466.7px;top:486.4px" width="21.2" height="21.2" viewBox="0 0 20 20"><use href="#gecko"/></svg>
<svg style="left:1497.100px;top:487.0px" width="12.6" height="19.6" viewBox="0 0 12.4 19.6"><use href="#block"/></svg>
<svg style="left:1519.2px;top:487.299px" width="21" height="20" viewBox="0 0 21 20"><use href="#sq"/></svg>
<svg style="left:1549.600px;top:487.0px" width="19" height="17.8" viewBox="0 0 18.4 17.6"><use href="#star"/></svg>
<span class="t" style="left:108.29px;top:490.64px;font-size:12px;line-height:12px;color:#6f7780;font-weight:700;">P</span>
<span class="t" style="left:139.20px;top:477.85px;font-size:14px;line-height:14px;color:#8d9196;font-weight:700;letter-spacing:-0.579px;">PEACH</span>
<span class="t" style="left:188.10px;top:475.86px;font-size:18px;line-height:18px;color:#4d5865;">/</span>
<span class="t" style="left:195.90px;top:479.54px;font-size:12px;line-height:12px;color:#4d5865;letter-spacing:-0.976px;-webkit-text-stroke:0.4px #4d5865;">WETH</span>
<span class="t" style="left:139.20px;top:498.50px;font-size:14px;line-height:14px;color:#4d5865;letter-spacing:0.409px;-webkit-text-stroke:0.45px #4d5865;">0x99b...<span style="margin:0 -0.90px 0 -0.60px">1</span>04d</span>
<span class="t" style="left:306.00px;top:489.15px;font-size:14px;line-height:14px;color:#4d5865;letter-spacing:0.613px;-webkit-text-stroke:0.45px #4d5865;">52 m 47 ss</span>
<span class="t" style="left:478.80px;top:489.00px;font-size:14px;line-height:14px;color:#4d5865;letter-spacing:-0.905px;-webkit-text-stroke:0.2px #4d5865;">RUG PULLED ?</span>
<span class="t" style="left:613.10px;top:479.40px;font-size:14px;line-height:14px;color:#3a444f;letter-spacing:0.770px;-webkit-text-stroke:0.5px #3a444f;">2023-<span style="margin:0 -0.90px 0 -0.60px">1</span><span style="margin:0 -0.90px 0 -0.60px">1</span>-06</span>
<span class="t" style="left:632.80px;top:502.17px;font-size:11.5px;line-height:11.5px;color:#3a444f;letter-spacing:-0.677px;-webkit-text-stroke:0.25px #3a444f;"><span style="margin:0 -0.74px 0 -0.49px">1</span>4:46:<span style="margin:0 -0.74px 0 -0.49px">1</span><span style="margin:0 -0.74px 0 -0.49px">1</span></span>
<span class="t" style="left:800.70px;top:488.95px;font-size:14px;line-height:14px;color:#4d5865;letter-spacing:0.638px;-webkit-text-stroke:0.5px #4d5865;">$0.02</span>
<span class="t" style="left:950.50px;top:488.95px;font-size:14px;line-height:14px;color:#4d5865;letter-spacing:-0.600px;-webkit-text-stroke:0.5px #4d5865;"><span style="margin:0 -0.90px 0 -0.60px">1</span>.5</span>
<span class="t" style="left:971.00px;top:488.95px;font-size:14px;line-height:14px;color:#4d5865;letter-spacing:-1.750px;-webkit-text-stroke:0.5px #4d5865;">ETH</span>
<span class="t" style="left:1206.70px;top:488.95px;font-size:14px;line-height:14px;color:#4d5865;-webkit-text-stroke:0.5px #4d5865;">0</span>
<span class="t" style="left:1219.50px;top:488.95px;font-size:14px;line-height:14px;color:#4d5865;letter-spacing:-1.750px;-webkit-text-stroke:0.5px #4d5865;">ETH</span>
<span class="t" style="left:1035.85px;top:491.12px;font-size:12.5px;line-height:12.5px;color:#fff;font-weight:700;letter-spacing:0.168px;">-<span style="margin:0 -0.80px 0 -0.54px">1</span>00%</span>
</div>
<div id="row-7" role="row">
<div class="av" style="left:99.4px;top:544.20px"></div>
<div class="a" style="left:116.85px;top:539.25px;width:13.9px;height:13.9px;box-sizing:border-box;border-radius:50%;background:#1b2630;border:1px solid #364350"></div>
<svg style="left:283.3px;top:549.75px" width="14.6" height="14.6" viewBox="0 0 14.6 14.6"><circle cx="7.3" cy="7.3" r="6.4" fill="none" stroke="#ffffff" stroke-width="1.6"/><path d="M7.3 3.6V7.5L9.8 9" fill="none" stroke="#ffffff" stroke-width="1.5" stroke-linecap="round" stroke-linejoin="round"/></svg>
<div class="bdg" style="left:1037.60px;top:547.25px;width:32px;background:#f8f9fa"></div>
<div class="bdg" style="left:1288px;top:547.00px;width:63px;height:21px;background:#26333f"></div>
<svg style="left:1466.4px;top:547.15px" width="21.2" height="21.2" viewBox="0 0 20 20"><use href="#cmc"/></svg>
<svg style="left:1497.100px;top:547.75px" width="12.6" height="19.6" viewBox="0 0 12.4 19.6"><use href="#block"/></svg>
<svg style="left:1519.2px;top:548.05px" width="21" height="20" viewBox="0 0 21 20"><use href="#sq"/></svg>
<svg style="left:1549.600px;top:547.75px" width="19" height="17.8" viewBox="0 0 18.4 17.6"><use href="#star"/></svg>
<span class="t" style="left:107.96px;top:551.39px;font-size:12px;line-height:12px;color:#eceff2;font-weight:700;">B</span>
<span class="t" style="left:120.89px;top:541.61px;font-size:9.5px;line-height:9.5px;color:#e3e7ec;font-weight:700;">?</span>
<span class="t" style="left:139.20px;top:538.60px;font-size:14px;line-height:14px;color:#ffffff;font-weight:700;letter-spacing:-1.422px;">BEG</span>
<span class="t" style="left:168.30px;top:536.61px;font-size:18px;line-height:18px;color:#7484a0;">/</span>
<span class="t" style="left:176.50px;top:540.29px;font-size:12px;line-height:12px;color:#7484a0;letter-spacing:-0.976px;-webkit-text-stroke:0.4px #7484a0;">WETH</span>
<span class="t" style="left:139.20px;top:559.25px;font-size:14px;line-height:14px;color:#ffffff;letter-spacing:0.439px;-webkit-text-stroke:0.45px #ffffff;">0x328...f6df</span>
<span class="t" style="left:306.10px;top:549.90px;font-size:14px;line-height:14px;color:#ffffff;letter-spacing:0.591px;-webkit-text-stroke:0.45px #ffffff;">53 m 23 ss</span>
<span class="t" style="left:562.50px;top:549.70px;font-size:14px;line-height:14px;color:#ffffff;-webkit-text-stroke:0.45px #ffffff;transform:scaleX(1.45);transform-origin:0 0;">-</span>
<span class="t" style="left:647.60px;top:549.70px;font-size:14px;line-height:14px;color:#ffffff;-webkit-text-stroke:0.45px #ffffff;transform:scaleX(1.45);transform-origin:0 0;">-</span>
<span class="t" style="left:830.80px;top:549.70px;font-size:14px;line-height:14px;color:#ffffff;-webkit-text-stroke:0.45px #ffffff;transform:scaleX(1.45);transform-origin:0 0;">-</span>
<span class="t" style="left:988.00px;top:549.70px;font-size:14px;line-height:14px;color:#ffffff;-webkit-text-stroke:0.45px #ffffff;transform:scaleX(1.45);transform-origin:0 0;">-</span>
<span class="t" style="left:1236.40px;top:549.70px;font-size:14px;line-height:14px;color:#ffffff;-webkit-text-stroke:0.45px #ffffff;transform:scaleX(1.45);transform-origin:0 0;">-</span>
<span class="t" style="left:1044.60px;top:552.29px;font-size:12px;line-height:12px;color:#1a232c;letter-spacing:0.656px;-webkit-text-stroke:0.25px #1a232c;">0%</span>
<span class="t" style="left:1296.35px;top:551.49px;font-size:12px;line-height:12px;color:#8b9bb4;letter-spacing:0.745px;-webkit-text-stroke:0.4px #8b9bb4;">No data</span>
</div>
<div id="row-8" role="row">
<div class="av" style="left:99.4px;top:604.95px;background:#18222b"></div>
<svg style="left:117px;top:599.90px;opacity:0.55" width="14" height="14" viewBox="0 0 20 20"><use href="#uni"/></svg>
<svg style="left:295.8px;top:610.5px" width="14.6" height="14.6" viewBox="0 0 14.6 14.6"><circle cx="7.3" cy="7.3" r="6.4" fill="none" stroke="#4d5865" stroke-width="1.6"/><path d="M7.3 3.6V7.5L9.8 9" fill="none" stroke="#4d5865" stroke-width="1.5" stroke-linecap="round" stroke-linejoin="round"/></svg>
<div class="bdg" style="left:1028.35px;top:608.00px;width:50.5px;background:#e63946"></div>
<svg style="left:1264.5px;top:610.45px" width="18" height="17" viewBox="0 0 18 17" fill="currentColor" color="#4a5664"><use href="#layer"/></svg>
<svg style="left:1299.5px;top:609.55px" width="13.4" height="14.1" viewBox="0 0 13.4 14.4" fill="currentColor" color="#4a5664"><use href="#lock"/></svg>
<svg style="left:1327.5px;top:610.45px" width="16.6" height="12.6" viewBox="0 0 16.6 12.6" fill="currentColor" color="#4a5664"><use href="#diag"/></svg>
<svg style="left:1360.6px;top:610.75px" width="16.6" height="11" viewBox="0 0 16.6 11" fill="currentColor" color="#4a5664"><use href="#money"/></svg>
<svg style="left:1436.2px;top:607.9px" width="21.2" height="21.2" viewBox="0 0 20 20"><use href="#cmc"/></svg>
<svg style="left:1466.7px;top:607.9px" width="21.2" height="21.2" viewBox="0 0 20 20"><use href="#gecko"/></svg>
<svg style="left:1497.100px;top:608.5px" width="12.6" height="19.6" viewBox="0 0 12.4 19.6"><use href="#block"/></svg>
<svg style="left:1519.2px;top:608.8px" width="21" height="20" viewBox="0 0 21 20"><use href="#sq"/></svg>
<svg style="left:1549.600px;top:608.5px" width="19" height="17.8" viewBox="0 0 18.4 17.6"><use href="#star"/></svg>
<span class="t" style="left:108.29px;top:612.14px;font-size:12px;line-height:12px;color:#6f7780;font-weight:700;">E</span>
<span class="t" style="left:139.20px;top:599.35px;font-size:14px;line-height:14px;color:#8d9196;font-weight:700;letter-spacing:-0.514px;">ERICSIMPS</span>
<span class="t" style="left:214.10px;top:597.36px;font-size:18px;line-height:18px;color:#4d5865;">/</span>
<span class="t" style="left:222.40px;top:601.04px;font-size:12px;line-height:12px;color:#4d5865;letter-spacing:-0.976px;-webkit-text-stroke:0.4px #4d5865;">WETH</span>
<span class="t" style="left:139.20px;top:620.00px;font-size:14px;line-height:14px;color:#4d5865;letter-spacing:0.298px;-webkit-text-stroke:0.45px #4d5865;">0xc9<span style="margin:0 -0.90px 0 -0.60px">1</span>...8e96</span>
<span class="t" style="left:318.30px;top:610.65px;font-size:14px;line-height:14px;color:#4d5865;letter-spacing:-0.451px;-webkit-text-stroke:0.45px #4d5865;"><span style="margin:0 -0.90px 0 -0.60px">1</span> h <span style="margin:0 -0.90px 0 -0.60px">1</span><span style="margin:0 -0.90px 0 -0.60px">1</span> ss</span>
<span class="t" style="left:478.80px;top:610.50px;font-size:14px;line-height:14px;color:#4d5865;letter-spacing:-0.905px;-webkit-text-stroke:0.2px #4d5865;">RUG PULLED ?</span>
<span class="t" style="left:613.10px;top:600.90px;font-size:14px;line-height:14px;color:#3a444f;letter-spacing:0.770px;-webkit-text-stroke:0.5px #3a444f;">2023-<span style="margin:0 -0.90px 0 -0.60px">1</span><span style="margin:0 -0.90px 0 -0.60px">1</span>-06</span>
<span class="t" style="left:629.80px;top:623.67px;font-size:11.5px;line-height:11.5px;color:#3a444f;letter-spacing:-0.166px;-webkit-text-stroke:0.25px #3a444f;"><span style="margin:0 -0.74px 0 -0.49px">1</span>4:34:35</span>
<span class="t" style="left:821.00px;top:610.45px;font-size:14px;line-height:14px;color:#4d5865;letter-spacing:1.722px;-webkit-text-stroke:0.5px #4d5865;">$0</span>
<span class="t" style="left:942.20px;top:610.45px;font-size:14px;line-height:14px;color:#4d5865;letter-spacing:-0.227px;-webkit-text-stroke:0.5px #4d5865;"><span style="margin:0 -0.90px 0 -0.60px">1</span>.03</span>
<span class="t" style="left:971.00px;top:610.45px;font-size:14px;line-height:14px;color:#4d5865;letter-spacing:-1.750px;-webkit-text-stroke:0.5px #4d5865;">ETH</span>
<span class="t" style="left:1206.70px;top:610.45px;font-size:14px;line-height:14px;color:#4d5865;-webkit-text-stroke:0.5px #4d5865;">0</span>
<span class="t" style="left:1219.50px;top:610.45px;font-size:14px;line-height:14px;color:#4d5865;letter-spacing:-1.750px;-webkit-text-stroke:0.5px #4d5865;">ETH</span>
<span class="t" style="left:1035.85px;top:612.62px;font-size:12.5px;line-height:12.5px;color:#fff;font-weight:700;letter-spacing:0.168px;">-<span style="margin:0 -0.80px 0 -0.54px">1</span>00%</span>
</div>
<div id="row-9" role="row">
<div class="av" style="left:99.4px;top:665.70px"></div>
<svg style="left:117px;top:660.65px;opacity:1" width="14" height="14" viewBox="0 0 20 20"><use href="#uni"/></svg>
<svg style="left:292.9px;top:671.25px" width="14.6" height="14.6" viewBox="0 0 14.6 14.6"><circle cx="7.3" cy="7.3" r="6.4" fill="none" stroke="#ffffff" stroke-width="1.6"/><path d="M7.3 3.6V7.5L9.8 9" fill="none" stroke="#ffffff" stroke-width="1.5" stroke-linecap="round" stroke-linejoin="round"/></svg>
<div class="bdg" style="left:1026.20px;top:668.75px;width:54.8px;background:#1fc16b"></div>
<svg style="left:1264.5px;top:671.20px" width="18" height="17" viewBox="0 0 18 17" fill="currentColor" color="#4a5664"><use href="#layer"/></svg>
<svg style="left:1299.5px;top:670.30px" width="13.4" height="14.1" viewBox="0 0 13.4 14.4" fill="currentColor" color="#4a5664"><use href="#lock"/></svg>
<svg style="left:1327.5px;top:671.20px" width="16.6" height="12.6" viewBox="0 0 16.6 12.6" fill="currentColor" color="#4a5664"><use href="#diag"/></svg>
<svg style="left:1360.6px;top:671.50px" width="16.6" height="11" viewBox="0 0 16.6 11" fill="currentColor" color="#4a5664"><use href="#money"/></svg>
<svg style="left:1405.800px;top:668.65px" width="21.2" height="21.2" viewBox="0 0 20 20"><use href="#uni"/></svg>
<svg style="left:1436.2px;top:668.65px" width="21.2" height="21.2" viewBox="0 0 20 20"><use href="#cmc"/></svg>
<svg style="left:1466.7px;top:668.65px" width="21.2" height="21.2" viewBox="0 0 20 20"><use href="#gecko"/></svg>
<svg style="left:1497.100px;top:669.25px" width="12.6" height="19.6" viewBox="0 0 12.4 19.6"><use href="#block"/></svg>
<svg style="left:1519.2px;top:669.55px" width="21" height="20" viewBox="0 0 21 20"><use href="#sq"/></svg>
<svg style="left:1549.600px;top:669.25px" width="19" height="17.8" viewBox="0 0 18.4 17.6"><use href="#star"/></svg>
<span class="t" style="left:139.20px;top:660.10px;font-size:14px;line-height:14px;color:#ffffff;font-weight:700;letter-spacing:-0.371px;">$BULLMOON</span>
<span class="t" style="left:226.90px;top:658.11px;font-size:18px;line-height:18px;color:#7484a0;">/</span>
<span class="t" style="left:234.60px;top:661.79px;font-size:12px;line-height:12px;color:#7484a0;letter-spacing:-0.976px;-webkit-text-stroke:0.4px #7484a0;">WETH</span>
<span class="t" style="left:139.20px;top:680.75px;font-size:14px;line-height:14px;color:#ffffff;letter-spacing:0.739px;-webkit-text-stroke:0.45px #ffffff;">0x50d...eda5</span>
<span class="t" style="left:314.00px;top:671.40px;font-size:14px;line-height:14px;color:#ffffff;letter-spacing:0.182px;-webkit-text-stroke:0.45px #ffffff;"><span style="margin:0 -0.90px 0 -0.60px">1</span> h 47 ss</span>
<span class="t" style="left:483.00px;top:671.20px;font-size:14px;line-height:14px;color:#ffffff;letter-spacing:0.670px;-webkit-text-stroke:0.45px #ffffff;">$0.00003<span style="margin:0 -0.90px 0 -0.60px">1</span>69</span>
<span class="t" style="left:613.10px;top:661.65px;font-size:14px;line-height:14px;color:#ffffff;letter-spacing:0.770px;-webkit-text-stroke:0.5px #ffffff;">2023-<span style="margin:0 -0.90px 0 -0.60px">1</span><span style="margin:0 -0.90px 0 -0.60px">1</span>-06</span>
<span class="t" style="left:629.80px;top:684.42px;font-size:11.5px;line-height:11.5px;color:#7c8aa6;letter-spacing:-0.166px;-webkit-text-stroke:0.25px #7c8aa6;"><span style="margin:0 -0.74px 0 -0.49px">1</span>4:33:59</span>
<span class="t" style="left:782.70px;top:671.20px;font-size:14px;line-height:14px;color:#ffffff;letter-spacing:0.832px;-webkit-text-stroke:0.5px #ffffff;">$48,828</span>
<span class="t" style="left:953.50px;top:671.20px;font-size:14px;line-height:14px;color:#ffffff;letter-spacing:-0.309px;-webkit-text-stroke:0.5px #ffffff;"><span style="margin:0 -0.90px 0 -0.60px">1</span>0</span>
<span class="t" style="left:971.00px;top:671.20px;font-size:14px;line-height:14px;color:#ffffff;letter-spacing:-1.750px;-webkit-text-stroke:0.5px #ffffff;">ETH</span>
<span class="t" style="left:1182.00px;top:671.20px;font-size:14px;line-height:14px;color:#ffffff;letter-spacing:0.059px;-webkit-text-stroke:0.5px #ffffff;"><span style="margin:0 -0.90px 0 -0.60px">1</span>2.99</span>
<span class="t" style="left:1219.50px;top:671.20px;font-size:14px;line-height:14px;color:#ffffff;letter-spacing:-1.750px;-webkit-text-stroke:0.5px #ffffff;">ETH</span>
<span class="t" style="left:1033.70px;top:673.37px;font-size:12.5px;line-height:12.5px;color:#fff;font-weight:700;letter-spacing:-0.259px;">30.<span style="margin:0 -0.80px 0 -0.54px">1</span>5%</span>
</div>
</div></body></html>
